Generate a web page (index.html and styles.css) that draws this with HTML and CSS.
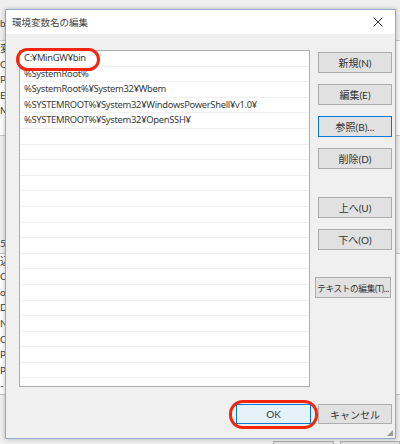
FILE: index.html
```html
<!DOCTYPE html>
<html lang="ja">
<head>
<meta charset="utf-8">
<title>環境変数名の編集</title>
<link rel="stylesheet" href="styles.css">
</head>
<body>
<div class="screen">
  <div class="bg">
    <div class="bg-head">b</div>
    <div class="bg-table bg-table-1">
      <div class="bg-row">変数</div>
      <div class="bg-row">Or</div>
      <div class="bg-row">Pa</div>
      <div class="bg-row">E</div>
      <div class="bg-row">M</div>
      <div class="bg-row"></div>
    </div>
    <div class="bg-label">5</div>
    <div class="bg-table bg-table-2">
      <div class="bg-row">込</div>
      <div class="bg-row">Co</div>
      <div class="bg-row">o</div>
      <div class="bg-row">Dr</div>
      <div class="bg-row">NU</div>
      <div class="bg-row">OS</div>
      <div class="bg-row">Pa</div>
      <div class="bg-row">PA</div>
      <div class="bg-row">-</div>
    </div>
    <div class="bg-bottom">
      <div class="bg-btn"></div>
      <div class="bg-btn"></div>
    </div>
  </div>

  <div class="dialog">
    <div class="titlebar">
      <span class="title">環境変数名の編集</span>
      <svg class="close" width="10" height="10" viewBox="0 0 10 10">
        <path d="M0.5 0.5 L9.5 9.5 M9.5 0.5 L0.5 9.5" stroke="#333" stroke-width="1" fill="none"/>
      </svg>
    </div>
    <div class="body">
      <div class="list">
        <div class="row">C:¥MinGW¥bin</div>
        <div class="row">%SystemRoot%</div>
        <div class="row">%SystemRoot%¥System32¥Wbem</div>
        <div class="row">%SYSTEMROOT%¥System32¥WindowsPowerShell¥v1.0¥</div>
        <div class="row">%SYSTEMROOT%¥System32¥OpenSSH¥</div>
        <div class="row"></div><div class="row"></div><div class="row"></div>
        <div class="row"></div><div class="row"></div><div class="row"></div>
        <div class="row"></div><div class="row"></div><div class="row"></div>
        <div class="row"></div><div class="row"></div><div class="row"></div>
        <div class="row"></div><div class="row"></div><div class="row"></div>
        <div class="row"></div>
      </div>
      <div class="buttons">
        <button class="btn">新規(N)</button>
        <button class="btn">編集(E)</button>
        <button class="btn focus">参照(B)...</button>
        <button class="btn">削除(D)</button>
        <button class="btn group">上へ(U)</button>
        <button class="btn">下へ(O)</button>
        <button class="btn group wide">テキストの編集(T)...</button>
      </div>
    </div>
    <div class="footer">
      <button class="btn ok">OK</button>
      <button class="btn">キャンセル</button>
    </div>
    <div class="grip"></div>
    <div class="mark mark-path"></div>
    <div class="mark mark-ok"></div>
  </div>
</div>
</body>
</html>
```

FILE: styles.css
```css
html, body {
  margin: 0;
  padding: 0;
}
body {
  width: 400px;
  height: 444px;
  overflow: hidden;
  background: #f0f0f0;
  font-family: Lato, "Noto Sans CJK JP", sans-serif;
  color: #333;
}
.screen {
  position: relative;
  width: 400px;
  height: 444px;
  overflow: hidden;
}

/* background window */
.bg {
  display: flex;
  flex-direction: column;
  width: 400px;
  height: 444px;
  font-size: 10px;
  color: #444;
}
.bg-head {
  height: 18px;
  margin-top: 14px;
  line-height: 18px;
}
.bg-table {
  background: #fff;
  border-top: 1px solid #c8c8c8;
  border-bottom: 1px solid #c8c8c8;
}
.bg-table-1 {
  margin-top: 8px;
}
.bg-row {
  height: 15.6px;
  line-height: 15.6px;
  white-space: nowrap;
}
.bg-label {
  margin-top: 100px;
  height: 15px;
  line-height: 15px;
}
.bg-table-2 {
  margin-top: 2px;
}
.bg-bottom {
  display: flex;
  gap: 6px;
  padding-left: 273px;
  margin-top: auto;
  height: 3px;
}
.bg-btn {
  width: 64px;
  height: 10px;
  border: 1px solid #adadad;
  background: #e1e1e1;
}

/* dialog */
.dialog {
  position: absolute;
  left: 5px;
  top: 9px;
  width: 389px;
  height: 428px;
  border: 1px solid #93a9cc;
  background: #f0f0f0;
  box-shadow: 0 0 5px rgba(0, 0, 0, 0.25);
  display: flex;
  flex-direction: column;
}
.titlebar {
  height: 24px;
  background: #fff;
  display: flex;
  align-items: center;
  justify-content: space-between;
  padding: 0 12px 0 6px;
}
.title {
  font-family: "Noto Sans CJK JP", sans-serif;
  font-size: 9.5px;
  color: #444;
}
.close {
  display: block;
}
.body {
  display: flex;
  padding: 16px 0 0 13px;
}
.list {
  width: 289px;
  height: 335px;
  border: 1px solid #adadad;
  background: #fff;
  overflow: hidden;
}
.row {
  height: 14.6px;
  border-bottom: 1px solid #f0f0f0;
  font-family: "Noto Sans", "Noto Sans CJK JP", sans-serif;
  font-size: 9.4px;
  letter-spacing: -0.3px;
  line-height: 14.6px;
  padding-left: 4px;
  white-space: nowrap;
  color: #3c3c3c;
}
.buttons {
  display: flex;
  flex-direction: column;
  gap: 11px;
  margin-left: 8px;
  padding-top: 2px;
}
.btn {
  box-sizing: border-box;
  width: 74px;
  height: 21px;
  margin: 0;
  padding: 0;
  border: 1px solid #adadad;
  background: #e1e1e1;
  font-family: Lato, "Noto Sans CJK JP", sans-serif;
  font-size: 10px;
  color: #333;
  white-space: nowrap;
  overflow: hidden;
}
.btn.focus {
  border-color: #0078d7;
}
.btn.group {
  margin-top: 17px;
}
.btn.wide {
  width: 76px;
  margin-left: -3px;
  margin-top: 16px;
  font-size: 8.6px;
  letter-spacing: -0.3px;
}
.footer {
  display: flex;
  justify-content: flex-end;
  gap: 7px;
  margin-top: 17px;
  padding-right: 3px;
}
.footer .btn {
  height: 20px;
}
.btn.ok {
  width: 75px;
  background: #e5f1fb;
  border-color: #0078d7;
}
.grip {
  position: absolute;
  right: 2px;
  bottom: 2px;
  width: 6px;
  height: 6px;
  background:
    radial-gradient(circle, #9a9a9a 0.8px, transparent 1px) 0 0 / 2px 2px;
  clip-path: polygon(100% 0, 100% 100%, 0 100%);
}
.mark {
  position: absolute;
  border: 3px solid #f3260c;
  box-sizing: border-box;
  pointer-events: none;
}
.mark-path {
  left: 10px;
  top: 38px;
  width: 84px;
  height: 23px;
  border-radius: 12px;
}
.mark-ok {
  left: 223px;
  top: 390px;
  width: 89px;
  height: 29px;
  border-radius: 14px;
}
```
